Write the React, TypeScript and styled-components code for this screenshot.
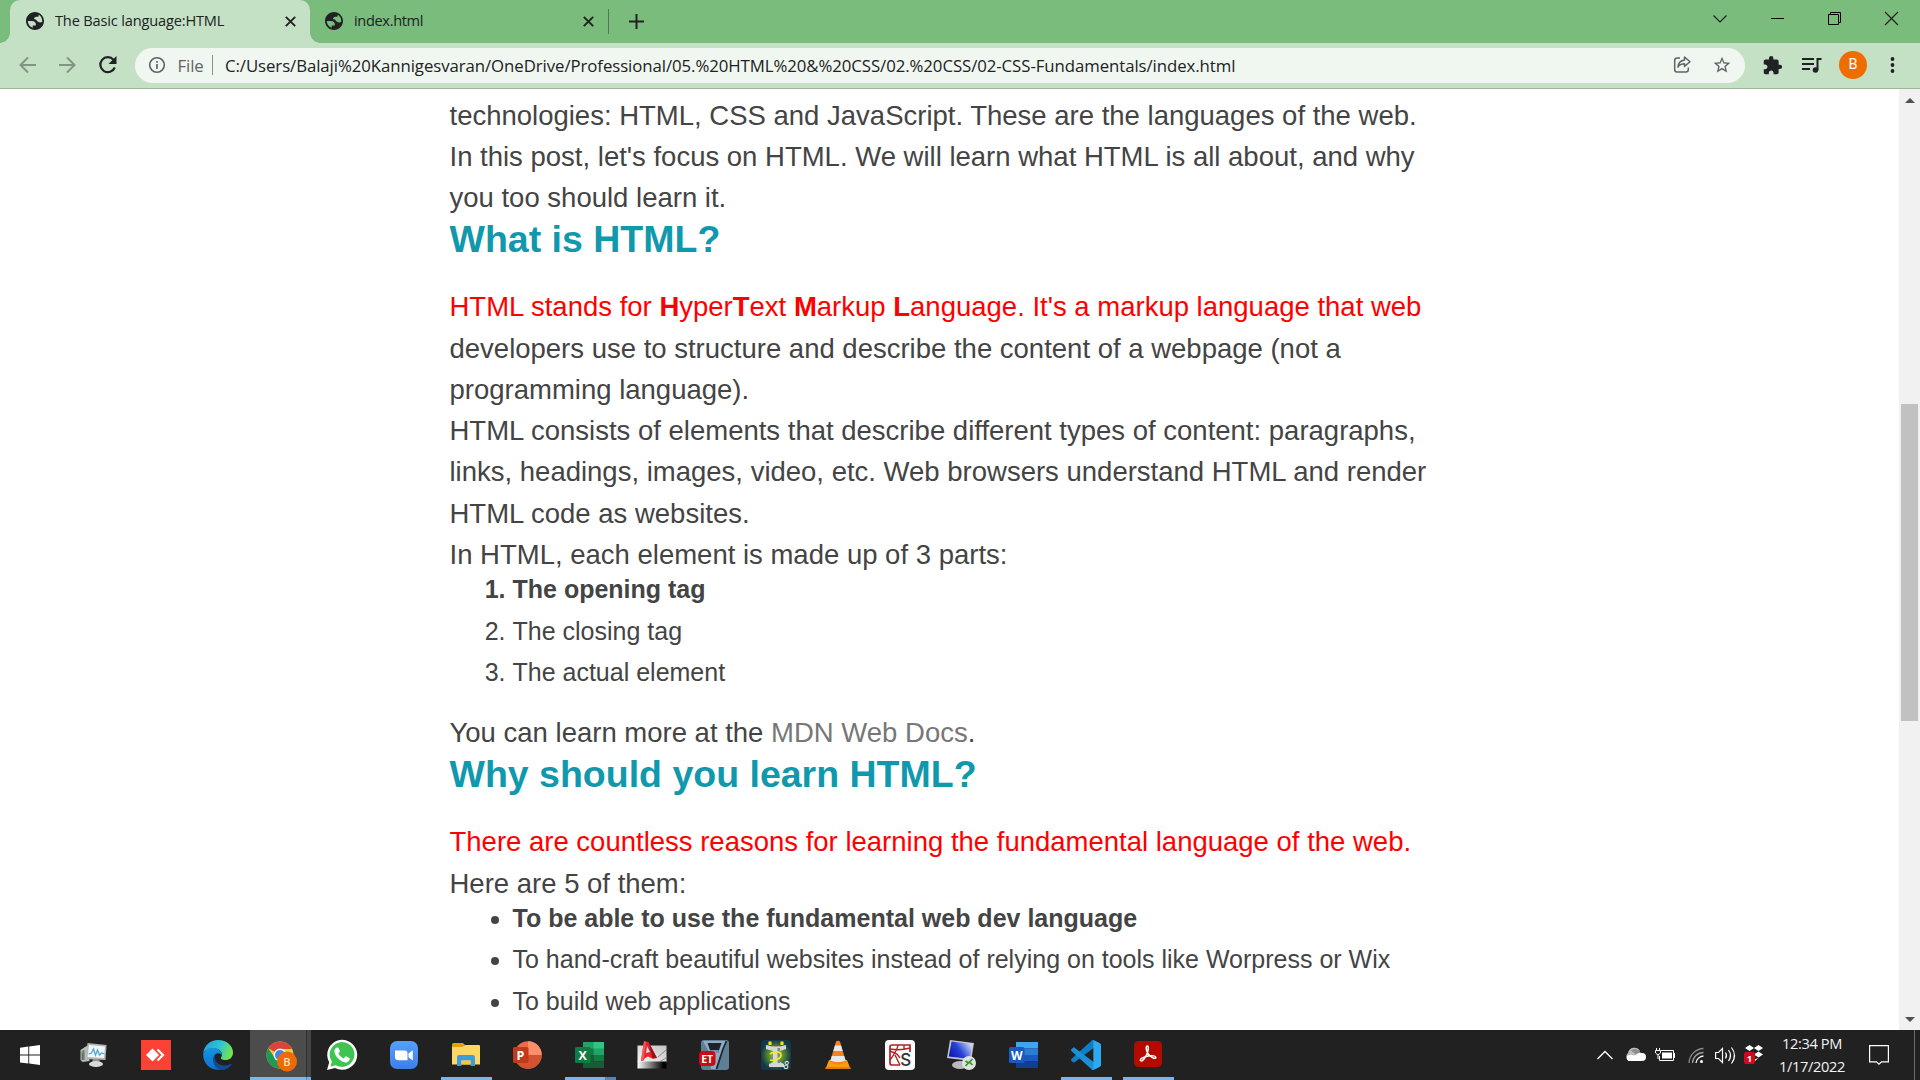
import React from "react";
import styled, { createGlobalStyle, css } from "styled-components";

const Global = createGlobalStyle`
  * { box-sizing: border-box; }
  html, body { margin: 0; padding: 0; overflow: hidden; background: #fff; }
  svg { display: block; flex: none; overflow: visible; }
`;

const uiFont = `"Open Sans", "Noto Sans", sans-serif`;

const Desktop = styled.div`
  width: 1920px;
  height: 1080px;
  display: flex;
  flex-direction: column;
  overflow: hidden;
  font-family: ${uiFont};
`;

/* ---------- tab strip ---------- */
const TabStrip = styled.div`
  height: 43px;
  flex: none;
  display: flex;
  background: #7abc7c;
  padding-left: 10px;
  color: #202124;
`;

const Tab = styled.div<{ $active?: boolean; $width: number }>`
  position: relative;
  width: ${(p) => p.$width}px;
  height: 43px;
  display: flex;
  align-items: center;
  padding: 0 ${(p) => (p.$active ? 14.5 : 15)}px 1px ${(p) => (p.$active ? 16 : 15)}px;
  font-size: 14.6px;
  ${(p) =>
    p.$active &&
    css`
      background: #c5e1c5;
      border-radius: 10px 10px 0 0;
      &::before,
      &::after {
        content: "";
        position: absolute;
        bottom: 0;
        width: 10px;
        height: 10px;
      }
      &::before {
        left: -10px;
        background: radial-gradient(circle at 0 0, transparent 9.5px, #c5e1c5 10px);
      }
      &::after {
        right: -10px;
        background: radial-gradient(circle at 100% 0, transparent 9.5px, #c5e1c5 10px);
      }
    `}
`;

const TabTitle = styled.span<{ $spacing: number }>`
  flex: 1;
  margin-left: 11px;
  padding-bottom: 2px;
  white-space: nowrap;
  letter-spacing: ${(p) => p.$spacing}px;
`;

const TabDivider = styled.div`
  width: 1px;
  height: 25px;
  margin: 9px 0 0 -1px;
  background: #4e7950;
`;

const NewTab = styled.div`
  width: 54px;
  display: flex;
  align-items: center;
  justify-content: center;
`;

const WindowControls = styled.div`
  margin-left: auto;
  display: flex;
  padding-top: 9px;
  width: 207px;
  justify-content: space-between;
  padding-right: 22px;
`;

/* ---------- toolbar ---------- */
const Toolbar = styled.div`
  height: 46px;
  flex: none;
  display: flex;
  align-items: center;
  background: #c5e1c5;
  border-bottom: 1px solid #9fb59f;
  padding: 0 21px 1px 18px;
`;

const NavButtons = styled.div`
  width: 117px;
  display: flex;
  gap: 20px;
`;

const Omnibox = styled.div`
  width: 1610px;
  height: 35px;
  border-radius: 18px;
  background: #f0f7f0;
  display: flex;
  align-items: center;
  padding: 0 13px 0 12px;
  font-size: 16.8px;
  color: #202124;
`;

const Scheme = styled.span`
  color: #5f6368;
  margin-left: 10.5px;
  width: 25px;
  letter-spacing: -0.1px;
`;

const SchemeDivider = styled.div`
  width: 1px;
  height: 20px;
  margin: 0 12.5px 0 9px;
  background: #8c928d;
`;

const Address = styled.span`
  flex: 1;
  white-space: nowrap;
  letter-spacing: -0.07px;
`;

const OmniboxActions = styled.div`
  display: flex;
  gap: 20px;
  align-items: center;
`;

const ToolbarActions = styled.div`
  flex: 1;
  display: flex;
  align-items: center;
  justify-content: space-between;
  padding-left: 17px;
`;

const Avatar = styled.div`
  width: 28px;
  height: 28px;
  border-radius: 50%;
  background: #ef6c00;
  color: #fff;
  font: 14.5px/28px Roboto, sans-serif;
  text-align: center;
`;

/* ---------- page ---------- */
const Viewport = styled.div`
  height: 941px;
  flex: none;
  display: flex;
  background: #fff;
`;

const Page = styled.main`
  flex: 1;
  height: 941px;
  overflow: hidden;
  padding-top: 5.6px;
  font-family: "Liberation Sans", Arial, sans-serif;
  color: #444;
`;

const Article = styled.article`
  width: 1000px;
  margin: 0 auto;
`;

const Paragraph = styled.p<{ $lead?: boolean }>`
  margin: 0;
  font-size: 27.5px;
  line-height: 41.25px;
  ${(p) =>
    p.$lead &&
    css`
      &::first-line {
        color: red;
      }
    `}
`;

const Heading = styled.h2`
  margin: 0 0 25px;
  font-size: 37.5px;
  line-height: 43px;
  color: #1098ad;
`;

const listStyle = css`
  margin: 0 0 25px;
  padding-left: 63px;
  font-size: 25px;
  line-height: 29px;
`;

const Steps = styled.ol`
  ${listStyle}
`;

const Reasons = styled.ul`
  ${listStyle}
`;

const Item = styled.li`
  margin-bottom: 12.5px;
  &:first-child {
    font-weight: bold;
  }
  &:last-child {
    margin-bottom: 0;
  }
`;

const DocLink = styled.a`
  color: #777;
`;

const Scrollbar = styled.div`
  width: 21px;
  background: #f1f1f1;
  display: flex;
  flex-direction: column;
  align-items: center;
  padding: 9px 0 8px;
`;

const Thumb = styled.div`
  width: 17px;
  height: 317px;
  margin: 301px 0 auto;
  background: #c1c1c1;
`;

const ScrollArrow = styled.div<{ $down?: boolean }>`
  border: 5px solid transparent;
  ${(p) => (p.$down ? "border-top-color: #505050; border-bottom: 0;" : "border-bottom-color: #505050; border-top: 0;")}
`;

/* ---------- taskbar ---------- */
const Taskbar = styled.div`
  height: 50px;
  flex: none;
  display: flex;
  background: #212121;
`;

const Slot = styled.div<{ $w?: number; $active?: boolean; $running?: boolean; $stacked?: boolean }>`
  width: ${(p) => p.$w ?? 62}px;
  height: 50px;
  display: grid;
  grid-template-rows: 47px 3px;
  justify-items: center;
  align-items: center;
  svg {
    margin-top: 3px;
  }
  &::after {
    content: "";
    grid-row: 2;
    height: 3px;
    margin-left: ${(p) => (p.$active ? 1 : 0)}px;
    width: ${(p) => (p.$active ? 61 : 51)}px;
    background: ${(p) =>
      !p.$running
        ? "none"
        : p.$active
        ? "linear-gradient(90deg, #76b9ed 56px, #5a8fbb 56px, #5a8fbb 57px, #76b0e6 57px)"
        : p.$stacked
        ? "linear-gradient(90deg, #7ab4ee 40px, #5a84ae 40px)"
        : "#7ab4ee"};
  }
  ${(p) =>
    p.$active &&
    css`
      background: linear-gradient(90deg, transparent 1px, #4c4c4c 1px, #4c4c4c 57px, #2e2e2e 57px, #2e2e2e 58px, #454545 58px);
    `}
`;

const Tray = styled.div`
  margin-left: auto;
  width: 323px;
  display: flex;
  align-items: center;
  color: #fff;
`;

const TrayIcons = styled.div`
  width: 168px;
  display: grid;
  grid-template-columns: 27.5px 30px 33.5px 27px 29px 21px;
  align-items: center;
`;

const Clock = styled.div`
  width: 94px;
  text-align: center;
  font-size: 14.6px;
  line-height: 23px;
  letter-spacing: -0.35px;
  color: #f2f2f2;
`;

const Notifications = styled.div`
  margin-left: 10px;
`;

const ShowDesktop = styled.div`
  margin-left: auto;
  width: 6px;
  height: 50px;
  border-left: 1px solid #6a6a6a;
`;

/* ---------- icons ---------- */
const Globe = () => (
  <svg width="18" height="18" viewBox="2 2 20 20">
    <path
      fill="#202124"
      d="M12 2C6.48 2 2 6.48 2 12s4.48 10 10 10 10-4.48 10-10S17.52 2 12 2zM4 12h4.4c3.4.02 4.9 1.73 4.55 5.12H9.5v2.48C6.31 18.55 4 15.54 4 12zm10.1-.2c-.7-1.5-2-1.5-3-1.7-.2-1.9.6-2.9 2.6-2.9h2.2c.1-1.2.1-1.8.5-2.2C18.6 6.4 20 9 20 12c0 .3 0 .5 0 .8-1 1-3.700 1.700-5.900-1z"
    />
  </svg>
);

const Close = () => (
  <svg width="11" height="11" viewBox="0 0 11 11" stroke="#202124" strokeWidth="1.9">
    <path d="M.8.8l9.400 9.400M10.200.8L.8 10.200" />
  </svg>
);

const WindowsLogo = () => (
  <svg width="20" height="20" viewBox="0 0 20 20" fill="#fff">
    <path d="M0 2.700L8.300 1.500V9.600H0zM9.200 1.400L20 0V9.600H9.200zM0 10.500H8.300V18.500L0 17.400zM9.200 10.500H20V20L9.200 18.600z" />
  </svg>
);

const Monitor = () => (
  <svg width="28" height="26" viewBox="0.500 0 28 26">
    <path d="M1 8l6-4 3 2v13l-7 1-2-2z" fill="#b9bcbc" />
    <path d="M2 9l3-1v10H2z" fill="#6c7070" />
    <path d="M1.500 10h2" stroke="#56d33a" strokeWidth="1.500" />
    <path d="M8 1l19 2-1 15-20-1z" fill="#b2b5b6" />
    <path d="M9.500 3l16 1.600-1 11.400L8 15z" fill="#f1f5f7" />
    <path d="M9 12l3-1 2-4 2 6 2-5 2 5 2-2 3 1" fill="none" stroke="#4ba7d8" strokeWidth="1.300" />
    <path d="M13 17h7v4h-7z" fill="#8e9292" />
    <ellipse cx="16.500" cy="22" rx="7" ry="3" fill="#d7dada" />
  </svg>
);

const AnyDesk = () => (
  <svg width="30" height="30" viewBox="0 0 30 30">
    <path fill="#fb4335" d="M0 0h30v30H0z" />
    <path fill="#fff" d="M11.500 8.500l6.500 6.500-6.500 6.500L5 15z" />
    <path d="M16.500 9.500l5.500 5.500-5.500 5.500" fill="none" stroke="#fff" strokeWidth="2.200" />
  </svg>
);

const Edge = () => (
  <svg width="30" height="30" viewBox="0 0 30 30">
    <defs>
      <linearGradient id="edgeTop" x1="0" x2="1" y1=".2" y2=".5">
        <stop offset="0" stopColor="#239fdf" />
        <stop offset=".55" stopColor="#31c5cf" />
        <stop offset="1" stopColor="#75e34a" />
      </linearGradient>
      <linearGradient id="edgeSide" x1="0" x2="0" y1="0" y2="1">
        <stop offset="0" stopColor="#1493df" />
        <stop offset="1" stopColor="#0874cf" />
      </linearGradient>
    </defs>
    <path fill="url(#edgeTop)" d="M.3 12.500C1.500 5 7.500 0 15 0c9 0 15 6 15 12.500 0 5-3.500 7.500-7.500 7.500-3.700 0-5-1.300-4.500-2.500 3-4-1-9-6.500-9C6 8.500 2 10.500.3 12.500z" />
    <path fill="url(#edgeSide)" d="M.2 13C2 9.500 6 7.500 10.500 8c5 .5 8.500 3.500 8.500 7-4-4-9-1-8.500 5 .4 5.500 4 9 8.500 9.500C9.500 31.500-.7 25 .2 13z" />
    <path fill="#124a91" d="M12.500 14.500c-2.500 5.500 2.500 11 8.500 11 3 0 5-.8 6.500-1.600.8-.4 1.300.3.800 1C26 28 22 30 18.500 30 11 29 7.500 19.500 12.500 14.500z" />
  </svg>
);

const Chrome = () => (
  <svg width="30" height="32" viewBox="-1 -2 30 32">
    <circle cx="14" cy="14" r="13.500" fill="#f7c93b" />
    <path fill="#d9443b" d="M14 14L2.300 7.200A13.500 13.500 0 0 1 26 8H14z" />
    <path fill="#1b9b56" d="M2.300 7.200A13.500 13.500 0 0 0 14 27.500l5-10.500-10 0z" />
    <circle cx="14" cy="14" r="6.500" fill="#f1f1f1" />
    <circle cx="14" cy="14" r="5" fill="#4285e8" />
    <circle cx="21" cy="20.500" r="10" fill="#ec6b08" />
    <text x="21" y="24.500" textAnchor="middle" fontFamily="Roboto" fontWeight="500" fontSize="11" fill="#ffe1c8">B</text>
  </svg>
);

const WhatsApp = () => (
  <svg width="30" height="30" viewBox="0 0 30 30">
    <path fill="#fff" d="M0 30l2.200-7.700A15 15 0 1 1 8 28z" />
    <path fill="#3fc351" d="M3.400 26.600l1.500-5A12.400 12.400 0 1 1 9 25.300z" />
    <path fill="#fff" d="M10.500 7.500c.6 0 1 .2 1.200.7l1.200 2.900c.1.400 0 .9-1.500 2.500 1.400 2.500 3 3.900 5.400 4.900l1.600-1.900c.3-.4.6-.4 1-.2l3 1.500c1 .5-.3 4.600-3.900 4.600C13 22 7 15 7.400 11c.1-1.800 1.400-3.500 3.100-3.500z" />
  </svg>
);

const Zoom = () => (
  <svg width="28" height="28" viewBox="0 0 28 28">
    <defs>
      <linearGradient id="zoomBlue" x1="0" x2="0" y1="0" y2="1">
        <stop stopColor="#57a0fb" />
        <stop offset="1" stopColor="#3d7eea" />
      </linearGradient>
    </defs>
    <rect width="28" height="28" rx="7" fill="url(#zoomBlue)" />
    <path fill="#fff" d="M5 9.500h9.500c2 0 3 1 3 3v6.800H8.500c-2.300 0-3.500-1-3.500-3zM18.500 12.500L22.800 9.300v10.200l-4.300-3.200z" />
  </svg>
);

const Explorer = () => (
  <svg width="28" height="24" viewBox="0 0 28 24">
    <path fill="#dfa208" d="M0 1.500Q0 0 1.500 0H11l2 2-3 4H0z" />
    <path fill="#ffd766" d="M0 4h10.500L13 2h14q1 0 1 1v18.500H0z" />
    <path fill="#3e9be0" d="M5 23v-9q0-2 2-2h14q2 0 2 2v9h-4.500v-5.500h-9V23z" />
    <path fill="#f5c644" d="M9.500 17.500h9v4h-9z" />
  </svg>
);

const PowerPoint = () => (
  <svg width="30" height="28" viewBox="1 0 30 28">
    <circle cx="16" cy="14" r="13.700" fill="#ed6c47" />
    <path fill="#ff8f6b" d="M16 .3A13.700 13.700 0 0 1 29.700 14H16z" />
    <path fill="#d35230" d="M2.300 14h27.400A13.700 13.700 0 0 1 2.300 14z" />
    <rect x="1" y="6" width="15.500" height="16" rx="1.500" fill="#c13b1b" />
    <text x="8.500" y="18.500" textAnchor="middle" fontFamily="Open Sans" fontWeight="700" fontSize="12.500" fill="#fff">P</text>
  </svg>
);

const Excel = () => (
  <svg width="30" height="28" viewBox="0 0 30 28">
    <path fill="#21a366" d="M8 1h21v13H8z" />
    <path fill="#33c481" d="M18.500 1H29v6.500H18.500z" />
    <path fill="#107c41" d="M8 7.500h10.500V14H8zM18.500 14H29v6.500H18.500z" />
    <path fill="#185c37" d="M8 14h10.500v6.500H29V27H8z" />
    <rect x="0" y="6" width="15.500" height="16" rx="1.500" fill="#107c41" />
    <text x="7.700" y="18.500" textAnchor="middle" fontFamily="Open Sans" fontWeight="700" fontSize="12.500" fill="#fff">X</text>
  </svg>
);

const AutoCad = () => (
  <svg width="30" height="30" viewBox="0 0 30 30">
    <defs>
      <linearGradient id="cadStrip" x1="0" x2="1">
        <stop stopColor="#fff" />
        <stop offset=".9" stopColor="#000" />
      </linearGradient>
      <linearGradient id="cadPaper" x1="0" x2="1" y1="1" y2="0">
        <stop stopColor="#f4f4f4" />
        <stop offset="1" stopColor="#c4c4c4" />
      </linearGradient>
    </defs>
    <path fill="url(#cadPaper)" d="M.5 5.500h29V22H.5z" />
    <path fill="url(#cadStrip)" d="M.5 21.500h29v7H.5z" />
    <path d="M21 17L29 10M22 22l7-4" stroke="#888" strokeWidth="1" />
    <path fill="#e5252c" fillRule="evenodd" d="M7 1l4.500 1L20 18l-5 .5-4-2-3 1.500-1.500 2.500L4 21zM9 13l4-1-3-6z" />
    <path fill="#9a1219" d="M11.500 2L20 18l-4.500.5z" />
    <path fill="#f2575b" d="M7 1l2 1-2.500 18L4 21z" />
  </svg>
);

const Etabs = () => (
  <svg width="31" height="30" viewBox="0 0 31 30">
    <rect x="2" y="0" width="28" height="30" rx="3" fill="#5f7f96" />
    <path fill="#8fabc0" d="M4 1h24l-3 6-8 22h-5l-1-15z" />
    <path fill="#1d2226" d="M8.500 3h14l-3.500 10h-7z" />
    <path fill="#7391a8" d="M11 10h9l-1 3h-7z" />
    <path d="M27.500 1L24 9l-6.500 20" fill="none" stroke="#20282e" strokeWidth="1.800" />
    <rect x="0" y="11" width="16.500" height="15" rx="4" fill="#c80c12" />
    <text x="8.200" y="22.500" textAnchor="middle" fontFamily="Open Sans" fontWeight="700" fontSize="10.500" fill="#fff">ET</text>
  </svg>
);

const SafeApp = () => (
  <svg width="30" height="30" viewBox="0 0 30 30">
    <defs>
      <radialGradient id="safeGlow">
        <stop stopColor="#a1c92c" />
        <stop offset=".5" stopColor="#5a8d32" />
        <stop offset="1" stopColor="#12394a" />
      </radialGradient>
    </defs>
    <rect width="30" height="30" rx="4" fill="url(#safeGlow)" />
    <path fill="#d3d8d5" d="M5 5q10 3 20 0v4l-6 2v11l4 2v3H8v-3l4-2V11L5 9z" />
    <path fill="#7d8a84" d="M16.500 8h2.500v15h-2.500z" />
    <path d="M9 1.500v3.500M21 1.500v3.500" stroke="#f2e91b" strokeWidth="3" />
    <path d="M9 14c4-3 11-3 11 1s-6 6-11 5" fill="none" stroke="#efe729" strokeWidth="1.700" />
    <text x="25" y="28.500" textAnchor="middle" fontFamily="Open Sans" fontStyle="italic" fontSize="10" fill="#fff">8</text>
  </svg>
);

const Vlc = () => (
  <svg width="26" height="30" viewBox="0 0 26 30">
    <path fill="#f99d16" d="M4 20h18l3.500 9H.5z" />
    <path fill="#e87b0c" d="M.8 27h24.400l.6 2H.2z" />
    <path fill="#f58220" d="M11 1.500q2-1.500 4 0l6 20.500q-8 5-16 0z" />
    <path fill="#e9e9e9" d="M10 5.500h6l1.700 5.500H8.300zM6.800 16h12.400l1.400 4.500q-7.600 3-15.200 0z" />
  </svg>
);

const StaadApp = () => (
  <svg width="30" height="30" viewBox="0 0 30 30">
    <rect width="30" height="30" rx="4" fill="#fdfdfd" />
    <path d="M15 25H7Q5 25 5 23V7Q5 5 7 5H25V12" fill="none" stroke="#ad2229" strokeWidth="1.700" />
    <path d="M5 9q10 2 20-1M13 5q-.5 5-8 15M5 11l7 3 3 4M10 15l5 10M19 5v5" fill="none" stroke="#ad2229" strokeWidth="1.400" />
    <text x="20.800" y="26" textAnchor="middle" fontFamily="Inter" fontWeight="500" fontSize="17" fill="#333">S</text>
  </svg>
);

const RemoteDesktop = () => (
  <svg width="30" height="30" viewBox="0 0 30 30">
    <defs>
      <linearGradient id="rdpScreen" x1="0" x2="1" y1=".7" y2=".2">
        <stop stopColor="#1118ae" />
        <stop offset=".45" stopColor="#2743d8" />
        <stop offset="1" stopColor="#d7e1f5" />
      </linearGradient>
    </defs>
    <path fill="#c5c8cb" d="M3 0l24 3-3 18-24-3z" />
    <path fill="url(#rdpScreen)" d="M4.500 1.500L25.300 4l-2.500 15L1.700 16.500z" />
    <ellipse cx="13" cy="25" rx="8" ry="4" fill="#b8babb" />
    <circle cx="22" cy="23" r="7" fill="#dfe2df" />
    <path d="M18.500 21l3 2-3 3M25.500 19l-3 3 3 3" fill="none" stroke="#2b972e" strokeWidth="1.700" />
  </svg>
);

const Word = () => (
  <svg width="30" height="28" viewBox="0 0 30 28">
    <path fill="#41a5ee" d="M7 1h22v6.500H7z" />
    <path fill="#2b7cd3" d="M7 7.500h22V14H7z" />
    <path fill="#185abd" d="M7 14h22v6.500H7z" />
    <path fill="#103f91" d="M7 20.500h22V27H7z" />
    <rect x="0" y="6" width="15.500" height="16" rx="1.500" fill="#185abd" />
    <text x="7.700" y="18.500" textAnchor="middle" fontFamily="Open Sans" fontWeight="700" fontSize="12" fill="#fff">W</text>
  </svg>
);

const VsCode = () => (
  <svg width="30" height="30" viewBox="0 0 100 100">
    <path fill="#0f7fc4" d="M96 10.600L75.400.9a6 6 0 0 0-7.100 1.200L1.300 63.200a4 4 0 0 0 0 6l5.500 5a4 4 0 0 0 5.300.2L93 13.300a4 4 0 0 1 7 3z" />
    <path fill="#1b8fd8" d="M96 89.400L75.400 99.100a6 6 0 0 1-7.100-1.200L1.300 36.800a4 4 0 0 1 0-6l5.500-5a4 4 0 0 1 5.300-.2L93 86.700a4 4 0 0 0 7-3z" />
    <path fill="#2da9f2" d="M75.400 99.100a6 6 0 0 1-7.100-1.200c2.300 2.300 6.200.7 6.200-2.500V4.600c0-3.200-3.900-4.800-6.200-2.500A6 6 0 0 1 75.400.9L96 10.800a6 6 0 0 1 4 5.600v67.200a6 6 0 0 1-4 5.600z" />
  </svg>
);

const Acrobat = () => (
  <svg width="28" height="28" viewBox="0 1 28 28">
    <rect y="1" width="28" height="26" rx="4.500" fill="#b30b00" />
    <path
      d="M6.700 20.700c-1.600-1.300 2.500-3.900 7.600-4.700 3.900-.6 7.500-.2 7.500 1.400 0 2.700-6.300-.8-8.100-4.300-1.800-3.300-2-7-.4-7 2 0 .8 6-1.300 9.800-1.700 3.200-4 5.800-5.300 4.800z"
      fill="none"
      stroke="#fff"
      strokeWidth="1.500"
    />
  </svg>
);

type App = { icon: React.ReactNode; running?: boolean; active?: boolean; stacked?: boolean };

const apps: App[] = [
  { icon: <Monitor /> },
  { icon: <AnyDesk /> },
  { icon: <Edge /> },
  { icon: <Chrome />, running: true, active: true },
  { icon: <WhatsApp /> },
  { icon: <Zoom /> },
  { icon: <Explorer />, running: true },
  { icon: <PowerPoint /> },
  { icon: <Excel />, running: true, stacked: true },
  { icon: <AutoCad /> },
  { icon: <Etabs /> },
  { icon: <SafeApp /> },
  { icon: <Vlc /> },
  { icon: <StaadApp /> },
  { icon: <RemoteDesktop /> },
  { icon: <Word /> },
  { icon: <VsCode />, running: true },
  { icon: <Acrobat />, running: true },
];

const TabBar = () => (
  <TabStrip>
    <Tab $active $width={300}>
      <Globe />
      <TabTitle $spacing={-0.17}>The Basic language:HTML</TabTitle>
      <Close />
    </Tab>
    <Tab $width={299}>
      <Globe />
      <TabTitle $spacing={-0.35}>index.html</TabTitle>
      <Close />
    </Tab>
    <TabDivider />
    <NewTab>
      <svg width="15" height="15" viewBox="0 0 15 15" stroke="#202124" strokeWidth="2">
        <path d="M7.500 0v15M0 7.500h15" />
      </svg>
    </NewTab>
    <WindowControls>
      <svg width="14" height="20" viewBox="0 0 14 20" fill="none" stroke="#1a1a1a" strokeWidth="1.100">
        <path d="M.5 6.500L7 13l6.500-6.500" />
      </svg>
      <svg width="13" height="20" viewBox="0 0 13 20" stroke="#000">
        <path d="M0 9.500h13" />
      </svg>
      <svg width="13" height="20" viewBox="0 0 13 20" fill="none" stroke="#000">
        <path d="M.5 5.500h10v10H.5zM2.500 5.500v-2h10v10h-2" />
      </svg>
      <svg width="13" height="20" viewBox="0 0 13 20" stroke="#1a1a1a" strokeWidth="1.100">
        <path d="M0 3l13 13M13 3L0 16" />
      </svg>
    </WindowControls>
  </TabStrip>
);

const AddressBar = () => (
  <Toolbar>
    <NavButtons>
      <svg width="20" height="20" viewBox="0 0 20 20" fill="none" stroke="#829482" strokeWidth="2">
        <path d="M18 10H3M10 2.500L2.500 10l7.500 7.500" />
      </svg>
      <svg width="20" height="20" viewBox="0 0 20 20" fill="none" stroke="#829482" strokeWidth="2">
        <path d="M1 10h15M9 2.500l7.500 7.500L9 17.500" />
      </svg>
      <svg width="20" height="20" viewBox="0 0 20 20">
        <path d="M16.800 12.500A7.500 7.500 0 1 1 15.500 4.700" fill="none" stroke="#202124" strokeWidth="2.200" />
        <path d="M18.500 1v8h-8z" fill="#202124" />
      </svg>
    </NavButtons>
    <Omnibox>
      <svg width="20" height="20" viewBox="0 0 20 20">
        <circle cx="10" cy="10" r="7.300" fill="none" stroke="#5f6368" strokeWidth="1.600" />
        <path d="M10 9v5M10 6v1.700" stroke="#5f6368" strokeWidth="1.700" />
      </svg>
      <Scheme>File</Scheme>
      <SchemeDivider />
      <Address>
        C:/Users/Balaji%20Kannigesvaran/OneDrive/Professional/05.%20HTML%20&amp;%20CSS/02.%20CSS/02-CSS-Fundamentals/index.html
      </Address>
      <OmniboxActions>
        <svg width="20" height="20" viewBox="0 0 20 20" fill="none" stroke="#5f6368" strokeWidth="1.500">
          <path d="M8 3H5Q2.700 3 2.700 5.500v9Q2.700 17 5 17h9q2.300 0 2.300-2.500v-2" />
          <path d="M12.500 2l5.500 4.700-5.500 4.700V8.800C9.500 8.800 7.500 9.500 6 12c.3-3.700 2.500-6.500 6.500-7z" strokeLinejoin="round" />
        </svg>
        <svg width="20" height="20" viewBox="0 0 24 24">
          <path fill="#5f6368" d="M22 9.240l-7.190-.62L12 2 9.190 8.630 2 9.240l5.460 4.730L5.820 21 12 17.270 18.180 21l-1.630-7.030L22 9.240zM12 15.400l-3.760 2.270 1-4.280-3.320-2.880 4.380-.38L12 6.100l1.710 4.040 4.380.38-3.320 2.880 1 4.280L12 15.400z" />
        </svg>
      </OmniboxActions>
    </Omnibox>
    <ToolbarActions>
      <svg width="21" height="21" viewBox="0 0 24 24">
        <path fill="#202124" d="M20.500 11H19V7c0-1.100-.9-2-2-2h-4V3.500a2.500 2.500 0 0 0-5 0V5H4c-1.100 0-1.990.9-1.990 2v3.800H3.500c1.490 0 2.700 1.210 2.700 2.700s-1.210 2.700-2.700 2.700H2V20c0 1.100.9 2 2 2h3.800v-1.500c0-1.490 1.210-2.700 2.700-2.700s2.700 1.210 2.700 2.700V22H17c1.100 0 2-.9 2-2v-4h1.500a2.500 2.500 0 0 0 0-5z" />
      </svg>
      <svg width="20" height="17" viewBox="-1 0 20 17" fill="none" stroke="#202124" strokeWidth="2">
        <path d="M0 2h12M0 7h12M0 12h8M15.500 13V2H19.500" />
        <circle cx="13.500" cy="13" r="2.800" fill="#202124" stroke="none" />
      </svg>
      <Avatar>B</Avatar>
      <svg width="14" height="18" viewBox="0 0 14 18" fill="#202124">
        <circle cx="7.500" cy="3" r="1.900" />
        <circle cx="7.500" cy="9" r="1.900" />
        <circle cx="7.500" cy="15" r="1.900" />
      </svg>
    </ToolbarActions>
  </Toolbar>
);

const Post = () => (
  <Article>
    <Paragraph>
      technologies: HTML, CSS and JavaScript. These are the languages of the web.
      <br />
      In this post, let's focus on HTML. We will learn what HTML is all about, and why you too should learn it.
    </Paragraph>
    <Heading>What is HTML?</Heading>
    <Paragraph $lead>
      HTML stands for <strong>H</strong>yper<strong>T</strong>ext <strong>M</strong>arkup <strong>L</strong>anguage.
      It's a markup language that web developers use to structure and describe the content of a webpage (not a
      programming language).
    </Paragraph>
    <Paragraph>
      HTML consists of elements that describe different types of content: paragraphs, links, headings, images, video,
      etc. Web browsers understand HTML and render HTML code as websites.
    </Paragraph>
    <Paragraph>In HTML, each element is made up of 3 parts:</Paragraph>
    <Steps>
      <Item>The opening tag</Item>
      <Item>The closing tag</Item>
      <Item>The actual element</Item>
    </Steps>
    <Paragraph>
      You can learn more at the <DocLink>MDN Web Docs</DocLink>.
    </Paragraph>
    <Heading>Why should you learn HTML?</Heading>
    <Paragraph $lead>
      There are countless reasons for learning the fundamental language of the web. Here are 5 of them:
    </Paragraph>
    <Reasons>
      <Item>To be able to use the fundamental web dev language</Item>
      <Item>To hand-craft beautiful websites instead of relying on tools like Worpress or Wix</Item>
      <Item>To build web applications</Item>
    </Reasons>
  </Article>
);

const SystemTray = () => (
  <Tray>
    <TrayIcons>
      <svg width="16" height="10" viewBox="0 0 16 10" fill="none" stroke="#fff" strokeWidth="1.300">
        <path d="M.5 9L8 1.500 15.500 9" />
      </svg>
      <svg width="21" height="14" viewBox="0 0 21 14">
        <path fill="#bdbdbd" d="M4 12A4 4 0 0 1 3 5 6.500 6.500 0 0 1 15 3l-5 4z" />
        <path fill="#8e8e8e" d="M6 2.500A6 6 0 0 1 15.500 5L12 7z" />
        <path fill="#fff" d="M3.500 13A4 4 0 0 1 2 8q4-2 6.500-.5L12 6a5 5 0 0 1 5-1 4 4 0 0 1 0 8z" />
      </svg>
      <svg width="20" height="14" viewBox="0 0 20 14">
        <path d="M6 2.500h12.500v10H4.500V8" fill="none" stroke="#fff" />
        <path d="M7 4.500h10v6H7zM19 5h1v5h-1z" fill="#fff" />
        <path d="M1.500 0v3M4.500 0v3M3 6v5" stroke="#fff" strokeWidth="1" />
        <path d="M.5 2.500h5V5L3 7 .5 5z" fill="#212121" stroke="#fff" />
      </svg>
      <svg width="16" height="17" viewBox="0 0 16 17" fill="none" strokeWidth="1.300">
        <path d="M1 16A15 15 0 0 1 15.500 1.500" stroke="#8a8a8a" />
        <path d="M4.500 16A11 11 0 0 1 15.500 5.500" stroke="#9a9a9a" />
        <path d="M8 16A8 8 0 0 1 15.500 9" stroke="#fff" />
        <circle cx="13.500" cy="14.500" r="1.500" fill="#fff" />
      </svg>
      <svg width="21" height="19" viewBox="0 0 21 19" fill="none" stroke="#fff" strokeWidth="1.200">
        <path d="M.6 6.500H3.500L7.500 2.500v14L3.500 12.500H.6zM10.500 6.500q2 3 0 6M13.500 4q4 5.500 0 11M16.500 1.500q6 8 0 16" />
      </svg>
      <svg width="20" height="20" viewBox="0 0 20 20">
        <path fill="#fff" d="M5.500 0L10 3 5.500 6 1 3zM14.500 0L19 3l-4.500 3L10 3zM14.500 6.500L19 9.500l-4.500 3-4.500-3zM10 14.500l4.500-1.500-4 3.500z" />
        <rect x="0" y="7" width="11" height="12" rx="2" fill="#d2091e" />
        <text x="5.500" y="16.500" textAnchor="middle" fontFamily="Open Sans" fontWeight="700" fontSize="9.500" fill="#fff">1</text>
      </svg>
    </TrayIcons>
    <Clock>
      <div>12:34 PM</div>
      <div>1/17/2022</div>
    </Clock>
    <Notifications>
      <svg width="20" height="20" viewBox="0 0 20 20" fill="none" stroke="#fff" strokeWidth="1.200">
        <path d="M.6.6h18.800v16.200H12.500L10 19.200l-2.500-2.400H.6z" />
      </svg>
    </Notifications>
    <ShowDesktop />
  </Tray>
);

export default function App() {
  return (
    <Desktop>
      <Global />
      <TabBar />
      <AddressBar />
      <Viewport>
        <Page>
          <Post />
        </Page>
        <Scrollbar>
          <ScrollArrow />
          <Thumb />
          <ScrollArrow $down />
        </Scrollbar>
      </Viewport>
      <Taskbar>
        <Slot $w={60}>
          <WindowsLogo />
        </Slot>
        <Slot $w={3} />
        {apps.map((a, i) => (
          <Slot key={i} $active={a.active} $running={a.running} $stacked={a.stacked}>
            {a.icon}
          </Slot>
        ))}
        <SystemTray />
      </Taskbar>
    </Desktop>
  );
}
